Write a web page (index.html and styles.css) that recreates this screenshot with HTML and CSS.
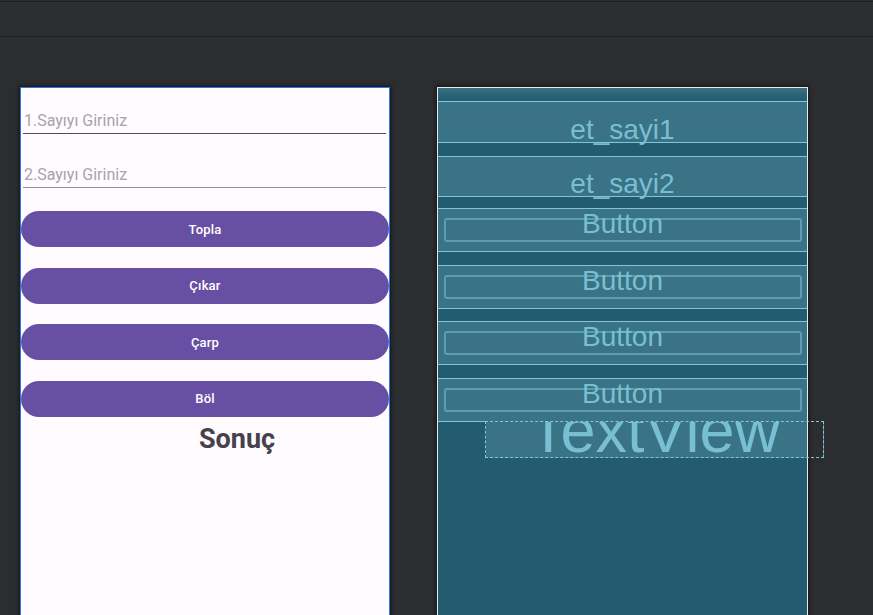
FILE: index.html
```html
<!DOCTYPE html>
<html lang="tr">
<head>
<meta charset="utf-8">
<title>Layout Editor</title>
<link rel="stylesheet" href="styles.css">
</head>
<body>
<div class="toolbar"></div>
<div class="canvas">
  <div class="phone design">
    <div class="field"><div class="line dark"><span class="hint">1.Sayıyı Giriniz</span></div></div>
    <div class="field second"><div class="line light"><span class="hint">2.Sayıyı Giriniz</span></div></div>
    <div class="btn-wrap first"><div class="pill">Topla</div></div>
    <div class="btn-wrap"><div class="pill">Çıkar</div></div>
    <div class="btn-wrap"><div class="pill">Çarp</div></div>
    <div class="btn-wrap"><div class="pill">Böl</div></div>
    <div class="result">Sonuç</div>
  </div>
  <div class="phone blueprint">
    <div class="bp-top"></div>
    <div class="bp-w bp-edit"><span class="bp-text">et_sayi1</span></div>
    <div class="bp-w bp-edit two"><span class="bp-text">et_sayi2</span></div>
    <div class="bp-w bp-btn first"><div class="frame"></div><span class="bp-text">Button</span></div>
    <div class="bp-w bp-btn"><div class="frame"></div><span class="bp-text">Button</span></div>
    <div class="bp-w bp-btn"><div class="frame"></div><span class="bp-text">Button</span></div>
    <div class="bp-w bp-btn"><div class="frame"></div><span class="bp-text">Button</span></div>
    <div class="bp-tv"><span class="bp-tv-text">TextView</span></div>
  </div>
</div>
</body>
</html>
```
FILE: styles.css
```css
html, body {
  margin: 0;
  height: 100%;
  overflow: hidden;
  background: #2b2d30;
}

.toolbar {
  margin-top: 1px;
  height: 34px;
  border-top: 1px solid #1e1f22;
  border-bottom: 1px solid #1e1f22;
  background: #2b2d30;
}

.canvas {
  display: flex;
  align-items: flex-start;
  gap: 47px;
  padding: 50px 0 0 20px;
}

.phone {
  flex: none;
  height: 600px;
}

/* ---------- design view ---------- */
.design {
  width: 368px;
  border: 1px solid #2a78f0;
  background: #fffbfe;
  box-shadow: 0 0 0 1px #1c1d20, 0 0 4px 1px #18191b;
  display: flex;
  flex-direction: column;
  overflow: hidden;
}

.field {
  margin: 13px 3px 0 2px;
  height: 41px;
  flex: none;
  box-sizing: border-box;
  padding-top: 11px;
}

.field.second {
  margin-top: 13px;
}

.line {
  height: 18px;
  padding: 0 0 3px 1px;
  border-bottom: 1px solid #4f4c52;
}

.line.light {
  border-bottom-color: #928f95;
}

.hint {
  display: block;
  font: 16px/18px Roboto, "Noto Sans", sans-serif;
  color: #a6a3a9;
  white-space: nowrap;
}

.btn-wrap {
  height: 43px;
  flex: none;
  box-sizing: border-box;
  padding: 3px 0 4px;
  margin-top: 13.67px;
}

.btn-wrap.first {
  margin-top: 12px;
}

.pill {
  height: 36px;
  border-radius: 18px;
  background: #6750a4;
  color: #ffffff;
  font: 500 13px Roboto, "Noto Sans", sans-serif;
  letter-spacing: 0.2px;
  display: flex;
  align-items: center;
  justify-content: center;
}

.result {
  margin-left: 47px;
  width: 338px;
  height: 36px;
  flex: none;
  font: 700 27px/36px Roboto, "Noto Sans", sans-serif;
  color: #46424b;
  text-align: center;
  white-space: nowrap;
}

/* ---------- blueprint view ---------- */
.blueprint {
  width: 369px;
  border: 1px solid #e6ecee;
  background: #235c6e;
  box-shadow: 0 0 0 1px #1c1d20, 0 0 4px 1px #18191b;
  display: flex;
  flex-direction: column;
}

.bp-top {
  height: 13px;
  flex: none;
  background: linear-gradient(#3b7082, #2c6476 45%, #245e70);
}

.bp-w {
  flex: none;
  border-top: 1px solid #80c5d8;
  border-bottom: 1px solid #80c5d8;
  background: #397385;
  text-align: center;
}

.bp-text {
  display: block;
  font: 28px/32px "Liberation Sans", Arial, sans-serif;
  color: #79bfd3;
  white-space: nowrap;
}

.bp-edit {
  height: 40px;
}

.bp-edit .bp-text {
  padding-top: 12px;
}

.bp-edit.two {
  margin-top: 13px;
  height: 39px;
}

.bp-edit.two .bp-text {
  padding-top: 11px;
}

.bp-btn {
  height: 42px;
  margin-top: 12.67px;
  display: grid;
}

.bp-btn.first {
  margin-top: 11px;
}

.bp-btn .frame,
.bp-btn .bp-text {
  grid-area: 1 / 1;
}

.frame {
  align-self: start;
  margin: 9px 5px 0 6px;
  height: 20px;
  border: 2px solid #5b9db1;
  border-radius: 3px;
}

.bp-btn .bp-text {
  align-self: start;
  margin-top: -1px;
}

.bp-tv {
  flex: none;
  margin: -1px 0 0 47px;
  width: 337px;
  height: 35px;
  border: 1px dashed #80c5d8;
  background: linear-gradient(to right, #397385 321px, transparent 321px);
  overflow: hidden;
  text-align: center;
}

.bp-tv-text {
  display: block;
  margin-top: -27px;
  font: 63px/70px "Liberation Sans", Arial, sans-serif;
  color: #79bfd3;
  white-space: nowrap;
}
```
